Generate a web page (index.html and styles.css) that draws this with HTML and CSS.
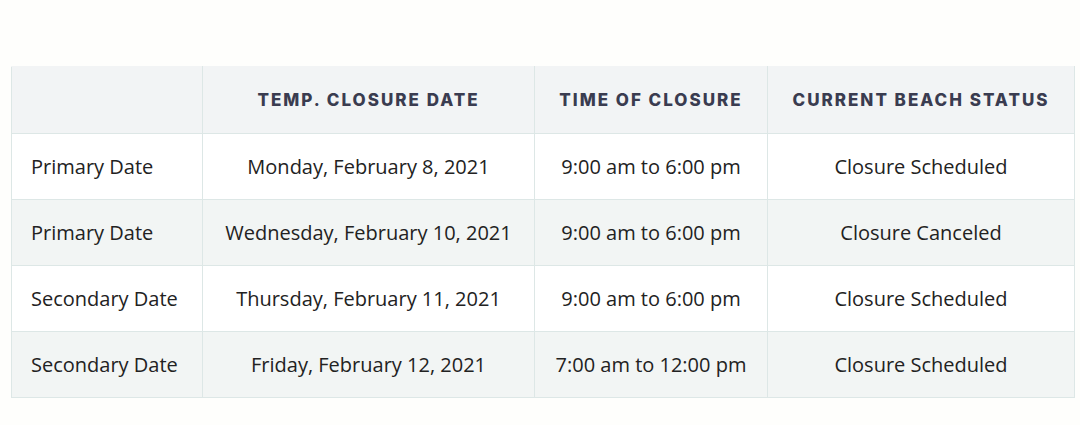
FILE: index.html
```html
<!DOCTYPE html>
<html>
<head>
<meta charset="utf-8">
<link rel="stylesheet" href="styles.css">
</head>
<body>
<div class="wrap">
<table class="closures">
<thead>
<tr><th></th><th>Temp. Closure Date</th><th>Time of Closure</th><th>Current Beach Status</th></tr>
</thead>
<tbody>
<tr><td>Primary Date</td><td>Monday, February 8, 2021</td><td>9:00 am to 6:00 pm</td><td>Closure Scheduled</td></tr>
<tr><td>Primary Date</td><td>Wednesday, February 10, 2021</td><td>9:00 am to 6:00 pm</td><td>Closure Canceled</td></tr>
<tr><td>Secondary Date</td><td>Thursday, February 11, 2021</td><td>9:00 am to 6:00 pm</td><td>Closure Scheduled</td></tr>
<tr><td>Secondary Date</td><td>Friday, February 12, 2021</td><td>7:00 am to 12:00 pm</td><td>Closure Scheduled</td></tr>
</tbody>
</table>
</div>
</body>
</html>
```
FILE: styles.css
```css
html, body { margin: 0; padding: 0; background: #fefefc; }
.wrap { padding: 66px 6px 0 11px; }
.closures {
  width: 1064px;
  border-collapse: collapse;
  table-layout: fixed;
  font-family: "Open Sans", "Noto Sans", sans-serif;
  font-size: 20px;
  color: #222;
}
.closures th:nth-child(1) { width: 191px; }
.closures th:nth-child(2) { width: 332px; }
.closures th:nth-child(3) { width: 233px; }
.closures th, .closures td {
  border: 1px solid #dde7e6;
  height: 66px;
  padding: 0;
  text-align: center;
  box-sizing: border-box;
}
.closures thead th {
  background: #f2f4f5;
  height: 67px;
  font-family: "Inter", "DejaVu Sans", sans-serif;
  font-weight: 800;
  font-size: 17px;
  letter-spacing: 2px;
  text-transform: uppercase;
  color: #3a3c50;
  border-top-color: #f2f4f5;
}
.closures td:first-child { text-align: left; padding-left: 19px; }
.closures tbody tr:nth-child(odd) td { background: #ffffff; }
.closures tbody tr:nth-child(even) td { background: #f2f5f4; }
```
